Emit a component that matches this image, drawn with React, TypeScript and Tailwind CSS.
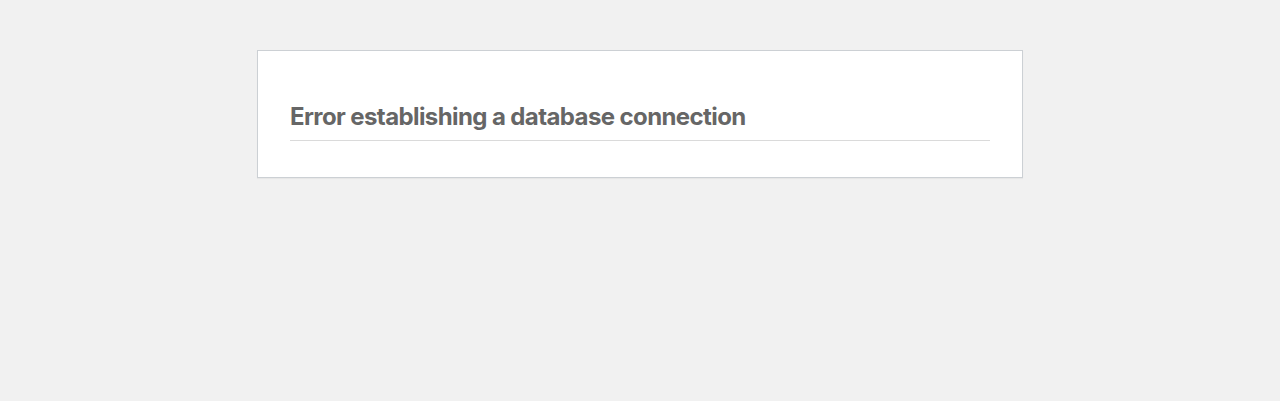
export default function App() {
  return (
    <div className="min-h-[401px] w-full bg-[#f1f1f1] pt-[50px]" style={{ fontFamily: 'Inter, "Liberation Sans", sans-serif' }}>
      <div className="mx-auto w-[766px] border border-[#ccd0d4] bg-white px-8 pt-4 pb-9 shadow-[0_1px_1px_rgba(0,0,0,0.04)]">
        <h1 className="mt-[30px] border-b border-[#dadada] pt-[2px] pb-[5px] text-[24px] leading-[36px] font-bold tracking-[-0.6px] text-[#666]">
          Error establishing a database connection
        </h1>
      </div>
    </div>
  );
}
